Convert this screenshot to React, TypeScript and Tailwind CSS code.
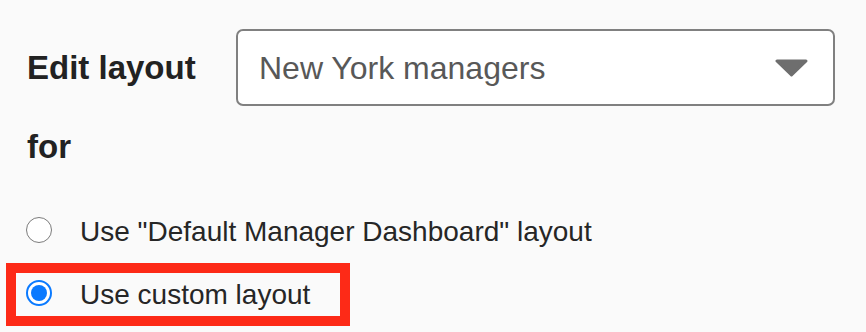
import { useState } from "react";

function Radio({ checked }: { checked: boolean }) {
    return checked ? (
        <span className="flex h-[26px] w-[26px] shrink-0 items-center justify-center rounded-full border-2 border-[#0a7aff] bg-white mb-1">
            <span className="h-[16px] w-[16px] rounded-full bg-[#0a7aff]" />
        </span>
    ) : (
        <span className="h-[26px] w-[26px] shrink-0 rounded-full border-[1.5px] border-[#7b7b7b] bg-white mb-1" />
    );
}

export default function App() {
    const [custom, setCustom] = useState(true);

    return (
        <div className="min-h-[332px] w-[866px] bg-[#fafafa] text-[#222] font-['Liberation_Sans',Arial,sans-serif]">
            <div className="flex flex-wrap items-center gap-y-[21px] pl-[27px] pt-[29px]">
                <span className="w-[209px] text-[33px] font-bold leading-[40px]">Edit layout</span>
                <div className="flex h-[77px] w-[599px] items-center justify-between rounded-[7px] border-2 border-[#808080] bg-white pl-[21px] pr-[25px]">
                    <span className="text-[32px] leading-[40px] text-[#585858]">New York managers</span>
                    {/* dropdown caret */}
                    <svg width="33" height="18" viewBox="0 0 33 18">
                        <polygon points="2,2 31,2 16.5,16" fill="#6e6e6e" stroke="#6e6e6e" strokeWidth="3" strokeLinejoin="round" />
                    </svg>
                </div>
                <span className="text-[33px] font-bold leading-[40px]">for</span>
            </div>

            <div className="mt-[33px] flex flex-col text-[28px] leading-[32px] text-[#262626]">
                <div className="flex h-[63px] items-center gap-[28px] pl-[26px]" onClick={() => setCustom(false)}>
                    <Radio checked={!custom} />
                    <span>Use "Default Manager Dashboard" layout</span>
                </div>
                <div
                    className="ml-[6px] flex h-[63px] w-[344px] items-center gap-[28px] border-[10px] border-[#fd2a17] pl-[10px]"
                    onClick={() => setCustom(true)}
                >
                    <Radio checked={custom} />
                    <span>Use custom layout</span>
                </div>
            </div>
        </div>
    );
}
